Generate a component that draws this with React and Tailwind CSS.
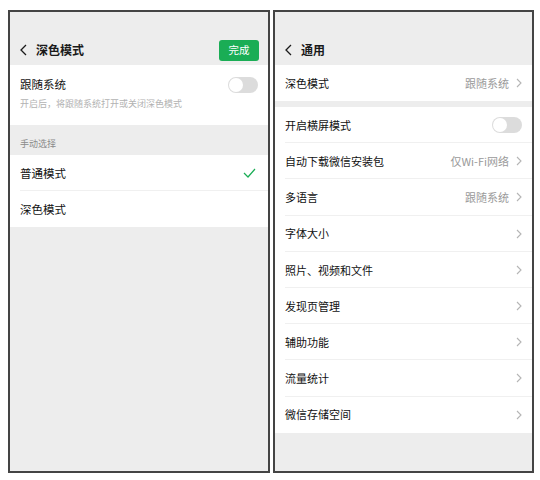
import React from 'react';

function Chevron({ className = '' }) {
  return (
    <svg width="6" height="10" viewBox="0 0 6 10" className={className}>
      <path d="M1 1l4 4-4 4" fill="none" stroke="currentColor" strokeWidth="1.1" />
    </svg>
  );
}

function BackArrow() {
  return (
    <svg width="7" height="12" viewBox="0 0 7 12" className="text-[#1a1a1a]">
      <path d="M6 1L1 6l5 5" fill="none" stroke="currentColor" strokeWidth="1.3" />
    </svg>
  );
}

function Toggle() {
  return (
    <div className="w-[30px] h-[16px] rounded-full bg-[#dcdcdc] flex items-center px-[1px]">
      <div className="w-[14px] h-[14px] rounded-full bg-white" />
    </div>
  );
}

function Header({ title, action }) {
  return (
    <div className="h-[53px] bg-[#ededed] flex items-end">
      <div className="h-[30px] w-full flex items-center pl-[10px] pr-[9px]">
        <BackArrow />
        <span className="ml-[9px] text-[12px] font-semibold text-[#1a1a1a]">{title}</span>
        <div className="flex-1" />
        {action}
      </div>
    </div>
  );
}

function Row({ label, value, toggle, chevron = true, divider = true }) {
  return (
    <div className="relative h-[36.2px] flex items-center pl-[10px] pr-[10px] bg-white">
      <span className="text-[11px] text-[#111] flex-1">{label}</span>
      {value && <span className="text-[11px] text-[#9a9a9a] mr-[7px]">{value}</span>}
      {toggle ? <Toggle /> : chevron && <Chevron className="text-[#b5b5b5]" />}
      {divider && <div className="absolute left-[10px] right-0 bottom-0 h-px bg-[#f0f0f0]" />}
    </div>
  );
}

const generalRows = [
  { label: '开启横屏模式', toggle: true },
  { label: '自动下载微信安装包', value: '仅Wi-Fi网络' },
  { label: '多语言', value: '跟随系统' },
  { label: '字体大小' },
  { label: '照片、视频和文件' },
  { label: '发现页管理' },
  { label: '辅助功能' },
  { label: '流量统计' },
  { label: '微信存储空间' },
];

export default function App() {
  return (
    <div className="w-[540px] h-[480px] bg-white pl-[8px] pt-[10px] flex gap-[3px] font-['Noto_Sans_CJK_SC','Noto_Sans',sans-serif]">
      {/* 深色模式 */}
      <div className="w-[262px] h-[463px] border-2 border-[#444] bg-[#ededed] flex flex-col overflow-hidden">
        <Header
          title="深色模式"
          action={
            <div className="w-[40px] h-[21px] rounded-[3px] bg-[#1aad55] flex items-center justify-center text-white text-[10.5px]">
              完成
            </div>
          }
        />
        <div className="h-[60px] bg-white px-[10px] pt-[11px] flex">
          <div className="flex-1">
            <div className="text-[11.5px] leading-[16px] text-[#111]">跟随系统</div>
            <div className="mt-[5px] text-[9px] leading-[14px] text-[#b2b2b2]">开启后，将跟随系统打开或关闭深色模式</div>
          </div>
          <div className="pt-[1px]">
            <Toggle />
          </div>
        </div>
        <div className="h-[30px] flex items-end px-[10px] pb-[4px]">
          <span className="text-[9px] leading-[14px] text-[#8a8a8a]">手动选择</span>
        </div>
        <div className="bg-white">
          <div className="relative h-[36px] flex items-center px-[10px]">
            <span className="text-[11.5px] text-[#111] flex-1 pt-[1px]">普通模式</span>
            <svg width="13" height="10" viewBox="0 0 13 10" className="mr-[2px]">
              <path d="M1 5l4 4 7-8" fill="none" stroke="#1aad55" strokeWidth="1.2" />
            </svg>
            <div className="absolute left-[10px] right-0 bottom-0 h-px bg-[#f0f0f0]" />
          </div>
          <div className="h-[36px] flex items-center px-[10px]">
            <span className="text-[11.5px] text-[#111] pt-[1px]">深色模式</span>
          </div>
        </div>
      </div>

      {/* 通用 */}
      <div className="w-[261px] h-[463px] border-2 border-[#444] bg-[#ededed] flex flex-col overflow-hidden">
        <Header title="通用" />
        <div className="h-[37px]">
          <Row label="深色模式" value="跟随系统" divider={false} />
        </div>
        <div className="h-[5px]" />
        {generalRows.map((r, i) => (
          <Row key={r.label} {...r} divider={i < generalRows.length - 1} />
        ))}
      </div>
    </div>
  );
}
